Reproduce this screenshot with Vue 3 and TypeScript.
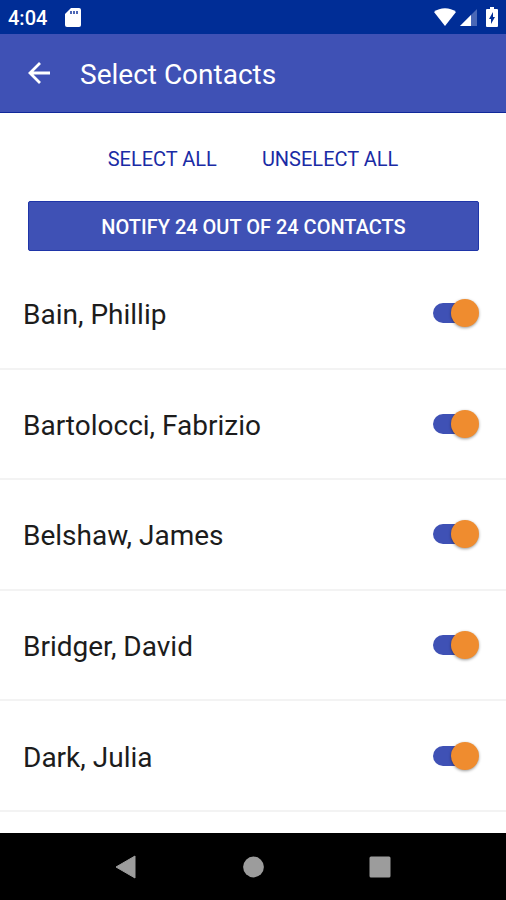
<script setup lang="ts">
import { computed, ref } from 'vue'

interface Contact {
  id: number
  name: string
  selected: boolean
}

const visible = ref<Contact[]>([
  { id: 1, name: 'Bain, Phillip', selected: true },
  { id: 2, name: 'Bartolocci, Fabrizio', selected: true },
  { id: 3, name: 'Belshaw, James', selected: true },
  { id: 4, name: 'Bridger, David', selected: true },
  { id: 5, name: 'Dark, Julia', selected: true },
])
const total = 24
const othersSelected = ref(total - visible.value.length)

const selectedCount = computed(
  () => othersSelected.value + visible.value.filter((c) => c.selected).length,
)

function setAll(selected: boolean) {
  visible.value.forEach((c) => (c.selected = selected))
  othersSelected.value = selected ? total - visible.value.length : 0
}
</script>

<template>
  <div class="screen">
    <div class="status">
      <span class="clock">4:04</span>
      <svg class="sd" viewBox="0 0 16 19" aria-hidden="true">
        <path fill="#fff" d="M6 0h8a2 2 0 0 1 2 2v15a2 2 0 0 1-2 2H2a2 2 0 0 1-2-2V6z" />
        <path fill="#4b66b4" d="M5 3h2v3H5zM8 3h2v3H8zM11 3h2v3h-2z" />
      </svg>
      <div class="signals">
        <svg class="wifi" viewBox="0 0 22 18" aria-hidden="true">
          <path fill="#fff" d="M0 4C6-1 16-1 22 4L11 18z" />
        </svg>
        <svg class="cell" viewBox="0 0 17 17" aria-hidden="true">
          <path fill="#4a68b6" d="M17 0v17H0z" />
          <path fill="#fff" d="M11 6v11H0z" />
        </svg>
        <svg class="battery" viewBox="0 0 12 20" aria-hidden="true">
          <path fill="#fff" d="M4 0h4v2h3a1 1 0 0 1 1 1v16a1 1 0 0 1-1 1H1a1 1 0 0 1-1-1V3a1 1 0 0 1 1-1h3z" />
          <path fill="#002d96" d="M7 5v5h2l-4 7v-5H3z" />
        </svg>
      </div>
    </div>

    <header class="toolbar">
      <button class="back" type="button" aria-label="Back">
        <svg viewBox="0 0 22 22" aria-hidden="true">
          <path d="M22 11H2M12 1L2 11l10 10" fill="none" stroke="#fff" stroke-width="2.8" />
        </svg>
      </button>
      <h1>Select Contacts</h1>
    </header>

    <main>
      <div class="choices">
        <button type="button" @click="setAll(true)">SELECT ALL</button>
        <button type="button" @click="setAll(false)">UNSELECT ALL</button>
      </div>
      <button class="notify" type="button">
        NOTIFY {{ selectedCount }} OUT OF {{ total }} CONTACTS
      </button>
      <ul class="contacts">
        <li v-for="contact in visible" :key="contact.id">
          <label :for="`contact-${contact.id}`">{{ contact.name }}</label>
          <input :id="`contact-${contact.id}`" v-model="contact.selected" class="switch" type="checkbox" role="switch" />
        </li>
      </ul>
    </main>

    <nav class="system">
      <button type="button" aria-label="System back">
        <svg viewBox="0 0 24 24" aria-hidden="true">
          <path d="M21 1v22L2 12z" fill="#9c9c9c" stroke="#9c9c9c" stroke-linejoin="round" />
        </svg>
      </button>
      <button type="button" aria-label="Home">
        <svg viewBox="0 0 24 24" aria-hidden="true"><circle cx="12.5" cy="12" r="10.4" fill="#9c9c9c" /></svg>
      </button>
      <button type="button" aria-label="Recent apps">
        <svg viewBox="0 0 24 24" aria-hidden="true">
          <rect x="1.5" y="1.5" width="21" height="21" rx="1.5" fill="#9c9c9c" />
        </svg>
      </button>
    </nav>
  </div>
</template>

<style>
body {
  margin: 0;
}
</style>

<style scoped>
.screen {
  display: flex;
  flex-direction: column;
  min-height: 100vh;
  background: #fff;
  color: #1c1c1c;
  font-family: Roboto, "Liberation Sans", sans-serif;
}

button {
  padding: 0;
  border: 0;
  background: none;
  font: inherit;
  cursor: pointer;
}

svg {
  display: block;
}

.status {
  display: flex;
  align-items: center;
  height: 34px;
  padding: 0 8px;
  background: #002d96;
  color: #fff;
}

.clock {
  font-size: 20px;
  font-weight: 500;
  line-height: 32px;
  padding-top: 2px;
}

.sd {
  width: 16px;
  height: 19px;
  margin-left: 18px;
}

.signals {
  display: flex;
  align-items: center;
  gap: 4px;
  margin-left: auto;
}

.wifi {
  width: 22px;
  height: 18px;
}

.cell {
  width: 17px;
  height: 17px;
}

.battery {
  width: 12px;
  height: 20px;
  margin-left: 5px;
}

.toolbar {
  display: flex;
  align-items: center;
  gap: 30px;
  box-sizing: border-box;
  height: 79px;
  padding: 0 28px;
  border-bottom: 1px solid #10289a;
  background: #3f51b5;
  color: #fff;
}

.back svg {
  width: 22px;
  height: 22px;
}

h1 {
  margin: 0;
  padding-top: 3px;
  font-size: 28px;
  font-weight: 400;
  line-height: 36px;
}

main {
  display: flex;
  flex: 1;
  flex-direction: column;
  padding: 24px 0 21px;
}

.choices {
  display: flex;
  justify-content: center;
  gap: 45px;
}

.choices button {
  color: #1a2ba5;
  font-size: 20px;
  line-height: 44px;
}

.notify {
  height: 50px;
  margin: 20px 27px 8px 28px;
  padding-top: 2px;
  border: 1px solid #1f35a8;
  border-radius: 2px;
  background: #3f51b5;
  color: #fff;
  font-size: 20px;
  font-weight: 500;
}

.contacts {
  display: flex;
  flex: 1;
  flex-direction: column;
  margin: 0;
  padding: 0;
  list-style: none;
}

.contacts li {
  display: flex;
  flex: 1;
  align-items: center;
  border-bottom: 2px solid #f3f3f3;
  padding: 0 27px 0 23px;
}

.contacts label {
  flex: 1;
  padding-top: 4px;
  font-size: 28px;
  line-height: 36px;
}

.switch {
  position: relative;
  appearance: none;
  width: 46px;
  height: 28px;
  margin: 0;
  cursor: pointer;
}

.switch::before {
  position: absolute;
  inset: 4px 4px 4px 0;
  border-radius: 10px;
  background: #b5b5b5;
  content: "";
}

.switch::after {
  position: absolute;
  top: 0;
  left: 0;
  width: 28px;
  height: 28px;
  border-radius: 50%;
  background: #f1f1f1;
  box-shadow: 0 1px 3px rgb(0 0 0 / 40%);
  content: "";
}

.switch:checked::before {
  background: #3f51b5;
}

.switch:checked::after {
  right: 0;
  left: auto;
  background: #ef8c2f;
}

.system {
  display: flex;
  align-items: center;
  justify-content: center;
  gap: 103px;
  height: 67px;
  background: #000;
}

.system svg {
  width: 24px;
  height: 24px;
}
</style>
